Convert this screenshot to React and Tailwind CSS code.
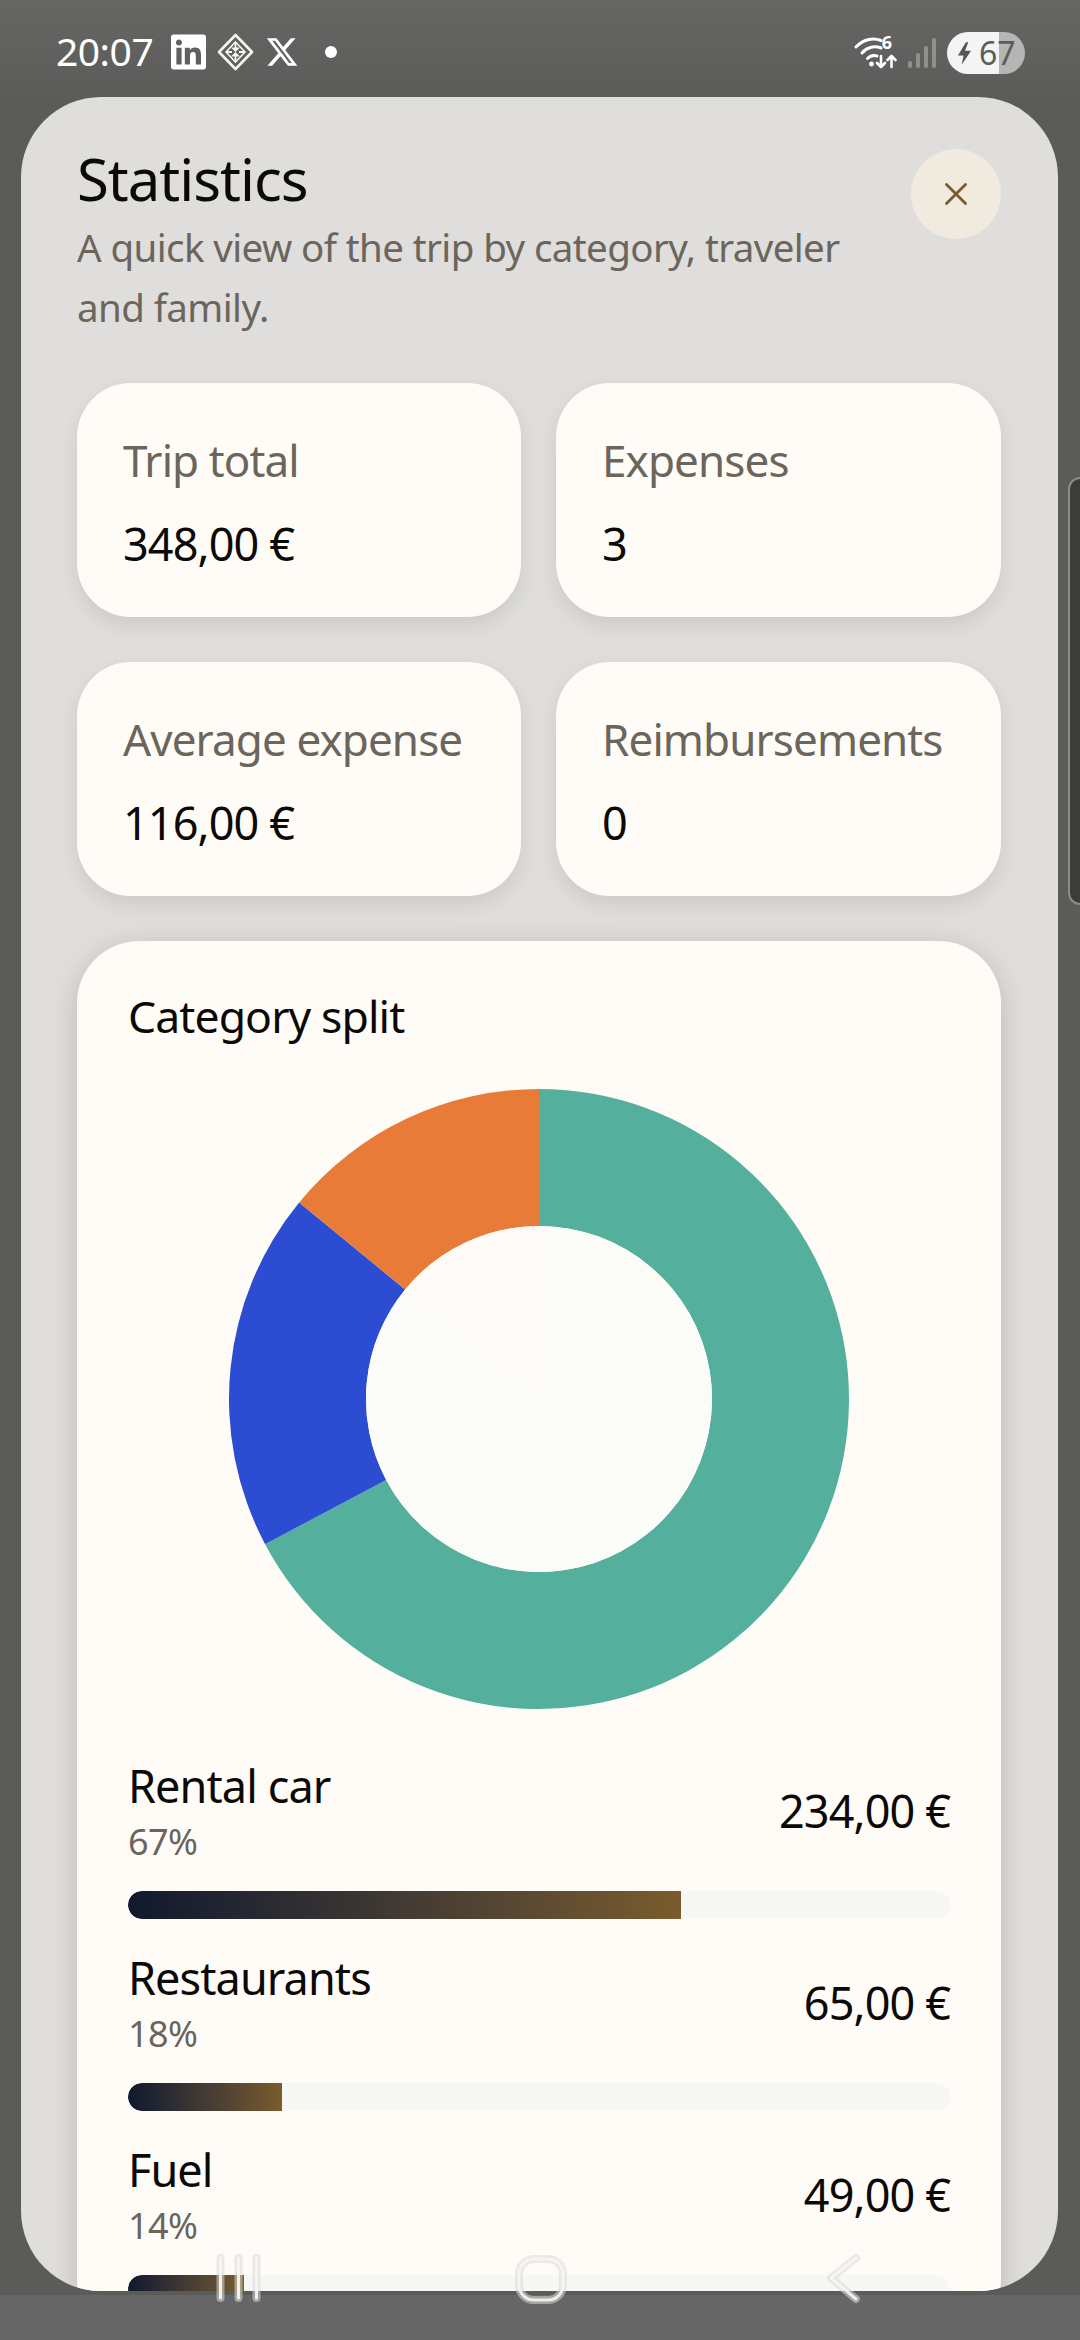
import React from "react";
import { FaLinkedin, FaXTwitter } from "react-icons/fa6";

const font = "font-['Noto_Sans',sans-serif]";

function slice(cx, cy, r0, r1, a0, a1) {
  const p = (r, a) => {
    const t = (a * 2 * Math.PI) - Math.PI / 2;
    return `${(cx + r * Math.cos(t)).toFixed(2)} ${(cy + r * Math.sin(t)).toFixed(2)}`;
  };
  const large = a1 - a0 > 0.5 ? 1 : 0;
  if (r0 === 0) return `M${cx} ${cy}L${p(r1, a0)}A${r1} ${r1} 0 ${large} 1 ${p(r1, a1)}Z`;
  return `M${p(r1, a0)}A${r1} ${r1} 0 ${large} 1 ${p(r1, a1)}L${p(r0, a1)}A${r0} ${r0} 0 ${large} 0 ${p(r0, a0)}Z`;
}

function Donut() {
  const a = 234 / 348;
  const b = a + 65 / 348;
  return (
    <svg width="620" height="620" viewBox="0 0 620 620" className="block">
      <path d={slice(310, 310, 173, 310, 0, a)} fill="#54b09d" />
      <path d={slice(310, 310, 173, 310, a, b)} fill="#2c4dd2" />
      <path d={slice(310, 310, 173, 310, b, 1)} fill="#e97b38" />
      <path d={slice(310, 310, 0, 173, 0, a)} fill="#fbfcf8" />
      <path d={slice(310, 310, 0, 173, a, b)} fill="#fcfcfb" />
      <path d={slice(310, 310, 0, 173, b, 1)} fill="#fefaf7" />
    </svg>
  );
}

function Stat({ label, value }) {
  return (
    <div className="h-[234px] rounded-[54px] bg-[#fffcf7] pl-[46px] pt-[49px] shadow-[0_8px_20px_rgba(0,0,0,0.09)]">
      <div className="text-[44px] leading-[56px] text-[#6b655c] tracking-[-0.9px] whitespace-nowrap">{label}</div>
      <div className="mt-[28px] text-[45px] leading-[56px] text-[#0b0a08] tracking-[-0.9px]">{value}</div>
    </div>
  );
}

function Row({ name, pct, amount, width }) {
  return (
    <div className="h-[192px]">
      <div className="flex h-[133px] items-start justify-between">
        <div>
          <div className="text-[45px] leading-[56px] text-[#0b0a08] tracking-[-0.9px]">{name}</div>
          <div className="mt-[6px] text-[36px] leading-[44px] text-[#6b655c] tracking-[-0.6px]">{pct}</div>
        </div>
        <div className="mt-[25px] text-[45px] leading-[56px] text-[#0b0a08] tracking-[-0.9px]">{amount}</div>
      </div>
      <div className="h-[28px] rounded-full bg-[#f7f7f3] overflow-hidden">
        <div
          className="h-full rounded-l-full bg-gradient-to-r from-[#11192e] to-[#7a5c2c]"
          style={{ width }}
        />
      </div>
    </div>
  );
}

function DiamondIcon() {
  return (
    <svg width="37" height="38" viewBox="0 0 37 38" fill="none" className="block">
      <path d="M18.5 2 35 19 18.5 36 2 19Z" stroke="#f4f4f2" strokeWidth="2.6" strokeLinejoin="round" />
      <path d="M18.5 9 28 19 18.5 29 9 19Z" stroke="#f4f4f2" strokeWidth="1.6" />
      <path d="M18.5 9v6M18.5 23v6M9 19h6M22 19h6" stroke="#f4f4f2" strokeWidth="1.8" />
      <path d="M14 14.500h9l-4.500 4.500ZM14 23.500h9l-4.500-4.500Z" fill="#f4f4f2" />
    </svg>
  );
}

function WifiIcon() {
  return (
    <div className="relative h-[34px] w-[44px]">
      <svg width="44" height="34" viewBox="0 0 44 34" fill="none" className="block">
        <path d="M2 11C10 2.500 20 1.500 27 4.500" stroke="#fff" strokeWidth="3" strokeLinecap="round" />
        <path d="M8 17C13 11 21 9.500 27 12" stroke="#fff" strokeWidth="3" strokeLinecap="round" />
        <path d="M13.500 22.500C16 20 20 19 23 20" stroke="#fff" strokeWidth="3" strokeLinecap="round" />
        <circle cx="17.500" cy="28" r="2.400" fill="#fff" />
        <path d="M27 20v11M23 27l4 4 4-4" stroke="#fff" strokeWidth="2.600" strokeLinecap="round" strokeLinejoin="round" />
        <path d="M37.500 31V20M33.500 24l4-4 4 4" stroke="#fff" strokeWidth="2.600" strokeLinecap="round" strokeLinejoin="round" />
      </svg>
      <span className="absolute right-[6px] top-[-4px] text-[18px] leading-[20px] font-bold text-white">6</span>
    </div>
  );
}

function SignalIcon() {
  return (
    <svg width="28" height="30" viewBox="0 0 28 30" className="block">
      <rect x="0" y="23" width="4" height="7" rx="2" fill="#8f8f8d" />
      <rect x="8" y="15" width="4" height="15" rx="2" fill="#8f8f8d" />
      <rect x="16" y="8" width="4" height="22" rx="2" fill="#8f8f8d" />
      <rect x="24" y="0" width="4" height="30" rx="2" fill="#8f8f8d" />
    </svg>
  );
}

function Battery() {
  return (
    <div className="relative flex h-[42px] w-[78px] items-center rounded-full bg-[linear-gradient(90deg,#f4f4f4_0,#f4f4f4_52px,#b5b5b3_52px)] pl-[10px]">
      <svg width="15" height="23" viewBox="0 0 16 24" className="block">
        <path d="M9.500 0 1 14h6l-2 10 10-15H8.500L12 0Z" fill="#555553" />
      </svg>
      <span className="ml-[7px] text-[32px] leading-[42px] text-[#5c5c5a]">67</span>
    </div>
  );
}

function NavIcons() {
  return (
    <svg width="1080" height="60" viewBox="0 0 1080 60" fill="none" className="absolute bottom-[35px] left-0 block">
      <g stroke="#d9d9d7" strokeOpacity="0.55" strokeWidth="8" strokeLinecap="round">
        <path d="M220.500 13V53M238.500 13V53M256.500 13V53" />
      </g>
      <g stroke="#f6f6f4" strokeOpacity="0.95" strokeWidth="3" strokeLinecap="round">
        <path d="M220.500 13V53M238.500 13V53M256.500 13V53" />
      </g>
      <rect x="519" y="14" width="44" height="41" rx="15" stroke="#d9d9d7" strokeOpacity="0.55" strokeWidth="8" />
      <rect x="519" y="14" width="44" height="41" rx="15" stroke="#f6f6f4" strokeOpacity="0.9" strokeWidth="3" />
      <path d="M856 13 831 33 856 54" stroke="#d9d9d7" strokeOpacity="0.55" strokeWidth="8" strokeLinecap="round" strokeLinejoin="round" />
      <path d="M856 13 831 33 856 54" stroke="#f6f6f4" strokeOpacity="0.9" strokeWidth="3" strokeLinecap="round" strokeLinejoin="round" />
    </svg>
  );
}

export default function App() {
  return (
    <div className={`${font} relative h-[2340px] w-[1080px] overflow-hidden bg-[linear-gradient(180deg,#666664_0,#5b5b59_100px,#5b5b59_100%)]`}>
      <div className="flex h-[97px] items-start justify-between pl-[56px] pr-[55px] pt-[32px]">
        <div className="flex items-center">
          <span className="mt-[-3px] text-[39px] leading-[42px] text-white tracking-[-0.5px]">20:07</span>
          <FaLinkedin className="ml-[18px] h-[40px] w-[35px] text-white" />
          <span className="ml-[11px]"><DiamondIcon /></span>
          <FaXTwitter className="ml-[11px] h-[36px] w-[34px] text-white" />
          <span className="ml-[26px] h-[12px] w-[12px] rounded-full bg-white" />
        </div>
        <div className="flex items-center">
          <WifiIcon />
          <span className="ml-[10px]"><SignalIcon /></span>
          <span className="ml-[11px]"><Battery /></span>
        </div>
      </div>

      <div className="ml-[21px] h-[2194px] w-[1037px] overflow-hidden rounded-[80px] bg-[#dfdedc] pl-[56px] pr-[57px] pt-[52px]">
        <div className="flex justify-between">
          <div className="w-[800px]">
            <h1 className="text-[58px] leading-[60px] font-normal text-[#0b0a08] tracking-[-1px]">Statistics</h1>
            <p className="mt-[8px] text-[38.500px] leading-[60px] text-[#6b655c] tracking-[-0.6px]">
              A quick view of the trip by category, traveler<br />and family.
            </p>
          </div>
          <button className="flex h-[90px] w-[90px] items-center justify-center rounded-full bg-[#f1eadf]">
            <svg width="24" height="24" viewBox="0 0 24 24" fill="none" className="block">
              <path d="M2.500 2.500 21.500 21.500M21.500 2.500 2.500 21.500" stroke="#7a5a2a" strokeWidth="2.800" strokeLinecap="round" />
            </svg>
          </button>
        </div>

        <div className="mt-[46px] grid grid-cols-[444px_445px] gap-x-[35px] gap-y-[45px]">
          <Stat label="Trip total" value="348,00 €" />
          <Stat label="Expenses" value="3" />
          <Stat label="Average expense" value="116,00 €" />
          <Stat label="Reimbursements" value="0" />
        </div>

        <div className="mt-[45px] h-[1400px] rounded-[62px] bg-[#fffcf7] px-[51px] pt-[47px] shadow-[0_6px_28px_rgba(0,0,0,0.16)]">
          <h2 className="text-[44.500px] leading-[56px] font-normal text-[#0b0a08] tracking-[-0.9px]">Category split</h2>
          <div className="mt-[45px] flex justify-center">
            <Donut />
          </div>
          <div className="mt-[49px]">
            <Row name="Rental car" pct="67%" amount="234,00 €" width="67.3%" />
            <Row name="Restaurants" pct="18%" amount="65,00 €" width="18.700%" />
            <Row name="Fuel" pct="14%" amount="49,00 €" width="14.100%" />
          </div>
        </div>
      </div>

      <div className="mt-[4px] h-[45px] bg-[#666666]" />

      <div className="absolute right-[-12px] top-[477px] h-[428px] w-[24px] rounded-[14px] border-2 border-[#8c8c8a] bg-[#3c3c3a]" />
      <NavIcons />
    </div>
  );
}
